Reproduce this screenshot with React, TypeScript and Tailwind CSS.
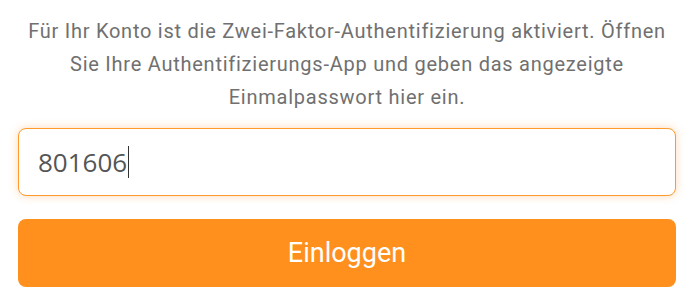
import React from "react";

export default function App() {
  return (
    <div className="w-[690px] h-[303px] bg-white pl-[18px] pr-[14px] pt-[15px]" style={{ fontFamily: "Roboto, 'Liberation Sans', sans-serif" }}>
      <p className="text-center text-[20px] leading-[33px] tracking-[0.75px] text-[#707070] px-[4px]">
        Für Ihr Konto ist die Zwei-Faktor-Authentifizierung aktiviert. Öffnen Sie Ihre Authentifizierungs-App und geben das angezeigte Einmalpasswort hier ein.
      </p>
      <div className="mt-[14px] h-[68px] rounded-[8px] border border-[#ff9a2e] bg-white shadow-[0_0_8px_rgba(255,150,40,0.35)] flex items-center pl-[19px]">
        <span className="text-[26px] text-[#555555]" style={{ fontFamily: "'Open Sans', sans-serif" }}>801606</span>
        <span className="ml-[1px] w-[1px] h-[32px] bg-[#333333]" />
      </div>
      <button className="mt-[23px] w-full h-[68px] rounded-[8px] bg-[#ff901e] text-white text-[27px] flex items-center justify-center">
        Einloggen
      </button>
    </div>
  );
}
